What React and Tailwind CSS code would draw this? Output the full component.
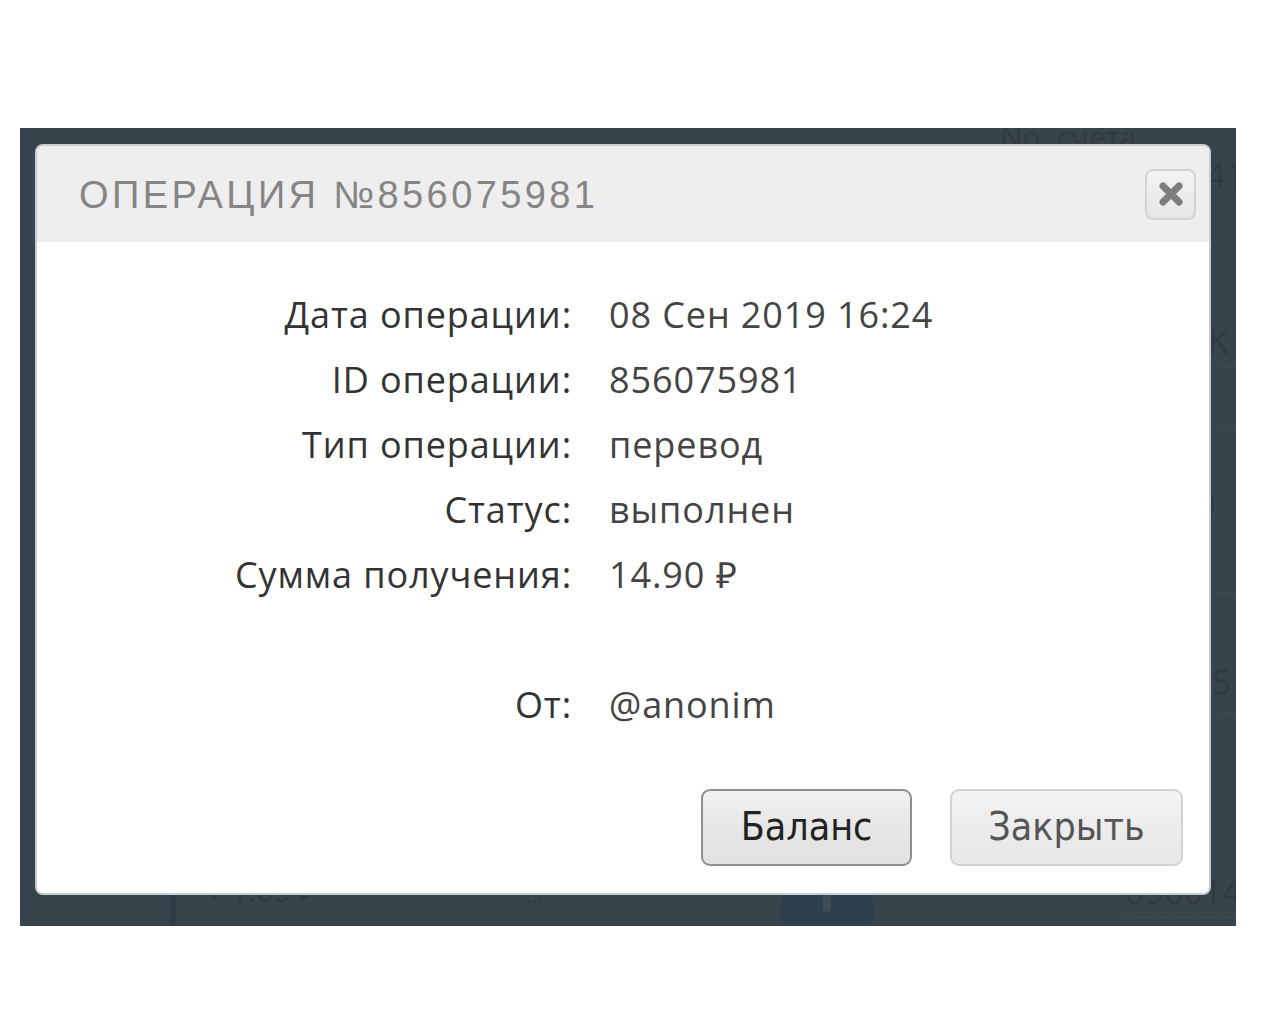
import React from "react";

const rows = [
  ["Дата операции:", "08 Сен 2019 16:24"],
  ["ID операции:", "856075981"],
  ["Тип операции:", "перевод"],
  ["Статус:", "выполнен"],
  ["Сумма получения:", "14.90 ₽"],
  ["", ""],
  ["От:", "@anonim"],
];

export default function App() {
  return (
    <div className="w-[1280px] h-[1024px] bg-white pt-[128px] pl-[20px]">
      <div className="relative w-[1216px] h-[798px] bg-[#38444c] overflow-hidden" style={{ fontFamily: "'Open Sans', sans-serif" }}>
        {/* faint background content (hidden page behind the overlay) */}
        <div className="absolute left-[980px] top-[-14px] text-[30px] text-[#2f3a42]">No. счета</div>
        <div className="absolute left-[1172px] top-[22px] w-[60px] flex flex-col text-[34px] text-[#2f3a42]">
          <div className="pl-[14px] h-[60px]">41</div>
          <div className="h-[106px]" />
          <div className="pl-[16px] h-[50px]">K</div>
          <div className="border-t border-dashed border-[#435059]" />
          <div className="h-[58px]" />
          <div className="border-t border-[#3e4a52]" />
          <div className="pl-[4px] h-[110px] pt-[62px] leading-none">0</div>
          <div className="h-[56px]" />
          <div className="border-t border-[#3e4a52]" />
          <div className="h-[72px]" />
          <div className="h-[48px] leading-none">75</div>
          <div className="border-t border-dashed border-[#435059]" />
        </div>
        <div className="absolute left-[150px] top-[738px] w-[1066px] flex items-start text-[#2f3a42]">
          <div className="w-[6px] h-[60px] mt-[22px] bg-[#2e3c47]" />
          <div className="ml-[30px] text-[30px] mt-[2px]">+ 1.65 ₽</div>
          <div className="ml-[210px] text-[24px] mt-[10px]">...</div>
          <div className="ml-[236px] w-[94px] h-[94px] rounded-full bg-[#2e404d] flex justify-center pt-[24px]">
            <div className="w-[8px] h-[22px] bg-[#3d4c57] rounded-sm" />
          </div>
          <div className="ml-auto mr-[-6px] flex flex-col">
            <div className="text-[34px]">050014</div>
            <div className="border-t border-dashed border-[#435059]" />
          </div>
        </div>

        {/* modal */}
        <div className="absolute left-[15px] top-[16px] w-[1176px] h-[751px] bg-white rounded-[8px] border-2 border-[#c9cdd0] overflow-hidden flex flex-col">
          <div className="h-[96px] shrink-0 bg-[#eeeeee] flex items-center justify-between pl-[42px] pr-[13px]">
            <div className="text-[38px] tracking-[3.4px] text-[#858585] pt-[2px]" style={{ fontFamily: "'Liberation Sans', sans-serif" }}>
              ОПЕРАЦИЯ №856075981
            </div>
            <div className="w-[51px] h-[51px] rounded-[8px] border-2 border-[#d3d3d3] bg-gradient-to-b from-[#f3f3f3] to-[#e6e6e6] flex items-center justify-center">
              <svg width="28" height="28" viewBox="0 0 28 28">
                <path d="M6 6 L22 22 M22 6 L6 22" stroke="#7d7d7d" strokeWidth="7" strokeLinecap="round" />
              </svg>
            </div>
          </div>
          <div className="pt-[40px] flex flex-col">
            {rows.map(([l, v], i) => (
              <div key={i} className="h-[65px] flex items-center text-[36px] tracking-[0.9px]">
                <div className="w-[535px] text-right text-[#333333]">{l}</div>
                <div className="pl-[37px] text-[#444444]">{v}</div>
              </div>
            ))}
          </div>
          <div className="flex justify-end gap-[38px] pr-[26px] mt-[52px]" style={{ fontFamily: "'DejaVu Sans Condensed', 'DejaVu Sans', sans-serif" }}>
            <button className="w-[211px] h-[77px] rounded-[9px] border-2 border-[#8f8f8f] bg-gradient-to-b from-[#f2f2f2] via-[#e6e6e6] to-[#e2e2e2] text-[39px] text-[#222222]">
              Баланс
            </button>
            <button className="w-[233px] h-[77px] rounded-[9px] border-2 border-[#d2d2d2] bg-gradient-to-b from-[#f4f4f4] via-[#ececec] to-[#e8e8e8] text-[39px] text-[#555555]">
              Закрыть
            </button>
          </div>
        </div>
      </div>
    </div>
  );
}
